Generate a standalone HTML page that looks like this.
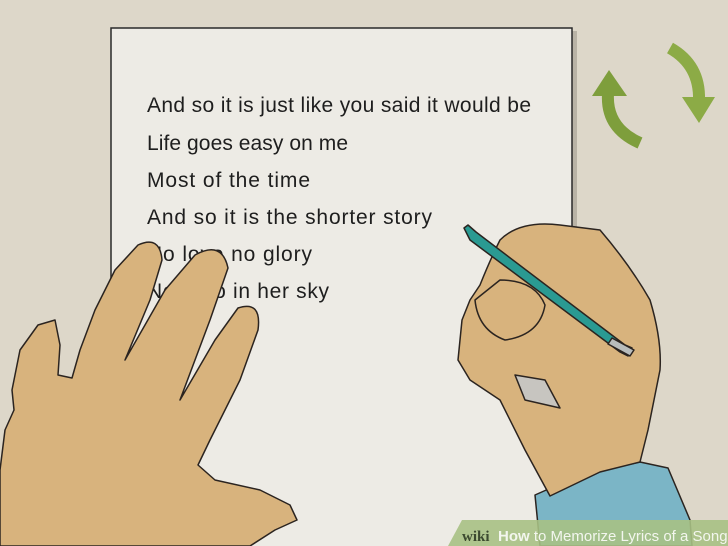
<!DOCTYPE html>
<html><head><meta charset="utf-8"><style>
html,body{margin:0;padding:0;width:728px;height:546px;overflow:hidden;background:#ddd7c9}
svg{display:block}
</style></head><body>
<svg width="728" height="546" viewBox="0 0 728 546" xmlns="http://www.w3.org/2000/svg">
<rect width="728" height="546" fill="#ddd7c9"/>
<rect x="114" y="31" width="463" height="530" fill="#b9b3a6"/>
<rect x="111" y="28" width="461" height="530" fill="#edebe5" stroke="#2a2a2a" stroke-width="1.5"/>
<!-- arrows -->
<path d="M640 143 Q606 128 608 94" fill="none" stroke="#7e9e3c" stroke-width="12"/>
<path d="M592 96 L609 70 L627 96 Z" fill="#7e9e3c"/>
<path d="M670 48 Q700 65 699 100" fill="none" stroke="#8cab46" stroke-width="12"/>
<path d="M682 97 L699 123 L715 97 Z" fill="#8cab46"/>
<!-- lyrics -->
<g font-family="'Liberation Sans',sans-serif" font-size="21" fill="#1e1e1e">
<text x="147" y="112" textLength="384">And so it is just like you said it would be</text>
<text x="147" y="150" textLength="201">Life goes easy on me</text>
<text x="147" y="187" textLength="163">Most of the time</text>
<text x="147" y="224" textLength="285">And so it is the shorter story</text>
<text x="147" y="261" textLength="165">No love no glory</text>
<text x="147" y="298" textLength="182">No hero in her sky</text>
</g>
<!-- left hand -->
<g fill="#d8b37d" stroke="#2b2420" stroke-width="1.5" stroke-linejoin="round">
<path d="M0 470 L5 430 L14 410 L12 390 L20 350 L38 325 L55 320 L60 345 L58 375 L72 378 L80 350 L95 310 L115 270 L138 245 Q160 235 162 260 L150 300 L125 360 L165 290 L195 255 Q222 240 228 268 L210 320 L180 400 L215 340 L238 308 Q262 300 258 330 L240 380 L210 440 L198 465 L215 480 L260 490 L290 505 L297 520 L275 530 L250 546 L0 546 Z"/>
</g>
<!-- right hand -->
<g stroke="#2b2420" stroke-width="1.5" stroke-linejoin="round">
<path d="M540 546 L535 495 L580 475 L640 462 L668 468 L690 520 L692 546 Z" fill="#7bb5c6"/>
<path d="M550 496 L525 450 L500 400 L470 380 L458 360 L462 320 L470 300 L480 285 Q490 260 500 240 Q520 220 560 225 L600 230 Q630 265 650 300 Q662 340 660 370 L648 430 L640 462 L600 472 Z" fill="#d8b37d"/>
<path d="M515 375 L525 400 L560 408 L545 380 Z" fill="#c7c5c0"/>
<path d="M468 225 L476 232 L625 345 L632 348 L628 356 L620 352 L470 240 L464 228 Z" fill="#2a9a92"/>
<path d="M612 338 L634 350 L630 356 L608 344 Z" fill="#b8bcbc"/>
<path d="M475 300 Q478 330 505 340 Q540 335 545 305 Q535 280 500 280 Z" fill="#d8b37d"/>
</g>
<!-- banner -->
<path d="M462 520 L728 520 L728 546 L448 546 Z" fill="#a7c184" opacity="0.9"/>
<text x="462" y="541" font-family="'Liberation Serif',serif" font-weight="bold" font-size="15" fill="#3c4a30">wiki</text>
<text x="498" y="541" font-family="'Liberation Sans',sans-serif" font-weight="bold" font-size="15" fill="#f3f6ee">How <tspan font-weight="normal">to Memorize Lyrics of a Song</tspan></text>
</svg>
</body></html>
